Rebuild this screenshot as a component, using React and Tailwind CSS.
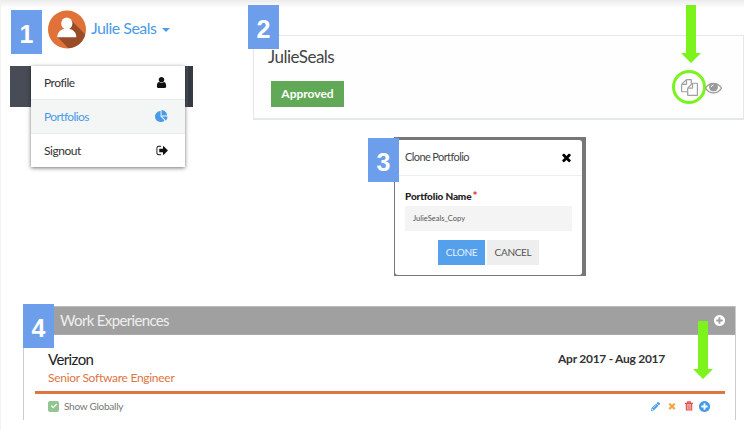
import React from "react";
import { FaPencilAlt, FaCheck } from "react-icons/fa";

const icons = {
  user: "M1536 1399q0 109-62.5 187t-150.5 78h-854q-88 0-150.5-78t-62.5-187q0-85 8.5-160.5t31.5-152 58.5-131 94-89 134.5-34.5q131 128 313 128t313-128q76 0 134.5 34.5t94 89 58.5 131 31.5 152 8.5 160.5zm-256-887q0 159-112.5 271.5t-271.5 112.5-271.5-112.5-112.5-271.5 112.5-271.5 271.5-112.5 271.5 112.5 112.5 271.5z",
  pie: "M768 890l546 546q-106 108-247.5 168t-298.5 60q-209 0-385.5-103t-279.5-279.5-103-385.5 103-385.5 279.5-279.5 385.5-103v762zm187 6h773q0 157-60 298.5t-168 247.5zm709-128h-768v-768q209 0 385.5 103t279.5 279.5 103 385.5z",
  files: "M1696 384q40 0 68 28t28 68v1216q0 40-28 68t-68 28h-960q-40 0-68-28t-28-68v-288h-544q-40 0-68-28t-28-68v-672q0-40 20-88t48-76l408-408q28-28 76-48t88-20h416q40 0 68 28t28 68v328q68-40 128-40h416zm-544 213l-299 299h299v-299zm-640-384l-299 299h299v-299zm196 647l316-316v-416h-384v416q0 40-28 68t-68 28h-416v640h512v-256q0-40 20-88t48-76zm956 804v-1152h-384v416q0 40-28 68t-68 28h-416v640h896z",
  eye: "M1664 960q-152-236-381-353 61 104 61 225 0 185-131.5 316.5t-316.5 131.5-316.5-131.5-131.5-316.5q0-121 61-225-229 117-381 353 133 205 333.5 326.5t434.5 121.5 434.5-121.5 333.5-326.5zm128 0q0 34-20 69-140 230-376.5 368.5t-499.5 138.5-499.5-139-376.5-368q-20-35-20-69t20-69q140-229 376.5-368t499.5-139 499.5 139 376.5 368q20 35 20 69z",
  signOut: "M704 1440q0 4 1 20t.5 26.5-3 23.5-10 19.5-20.5 6.5h-320q-119 0-203.5-84.5t-84.5-203.5v-704q0-119 84.5-203.5t203.5-84.5h320q13 0 22.5 9.5t9.5 22.5q0 4 1 20t.5 26.5-3 23.5-10 19.5-20.5 6.5h-320q-66 0-113 47t-47 113v704q0 66 47 113t113 47h312l11.5 1 11.5 3 8 5.5 7 9 2 13.5zm928-544q0 26-19 45l-544 544q-19 19-45 19t-45-19-19-45v-288h-448q-26 0-45-19t-19-45v-384q0-26 19-45t45-19h448v-288q0-26 19-45t45-19 45 19l544 544q19 19 19 45z",
  plus: "M1344 960v-128q0-26-19-45t-45-19h-256v-256q0-26-19-45t-45-19h-128q-26 0-45 19t-19 45v256h-256q-26 0-45 19t-19 45v128q0 26 19 45t45 19h256v256q0 26 19 45t45 19h128q26 0 45-19t19-45v-256h256q26 0 45-19t19-45zm320-64q0 209-103 385.5t-279.5 279.5-385.5 103-385.5-103-279.5-279.5-103-385.5 103-385.5 279.5-279.5 385.5-103 385.5 103 279.5 279.5 103 385.5z",
  times: "M1490 1322q0 40-28 68l-136 136q-28 28-68 28t-68-28l-294-294-294 294q-28 28-68 28t-68-28l-136-136q-28-28-28-68t28-68l294-294-294-294q-28-28-28-68t28-68l136-136q28-28 68-28t68 28l294 294 294-294q28-28 68-28t68 28l136 136q28 28 28 68t-28 68l-294 294 294 294q28 28 28 68z",
};

function Icon({ name, className }) {
  return (
    <svg viewBox="0 0 1792 1792" fill="currentColor" className={className}>
      <path d={icons[name]} />
      {name === "eye" && (
        <>
          <circle cx="896" cy="860" r="430" />
          <path d="M660 860q0-200 236-220" fill="none" stroke="#fff" strokeWidth="100" />
        </>
      )}
    </svg>
  );
}

function Trash({ className }) {
  return (
    <svg viewBox="0 0 9 11" fill="none" stroke="currentColor" className={className}>
      <path d="M0 2.500h9M3 2V.8h3V2" strokeWidth="1.300" />
      <path d="M1.500 3v7h6V3z" strokeWidth="1.300" fill="currentColor" fillOpacity="0.35" />
      <path d="M3.500 4.500V9M5.500 4.500V9" strokeWidth="0.900" />
    </svg>
  );
}

function Badge({ n, className }) {
  return (
    <div className={`absolute z-10 flex h-11 w-[31px] items-center justify-center bg-[#6d9eeb] pt-1 font-['Liberation_Sans',sans-serif] text-[25px] leading-none font-bold text-white ${className}`}>
      {n}
    </div>
  );
}

function Arrow({ className }) {
  return (
    <svg viewBox="0 0 20 58" fill="#7cf31c" className={`absolute z-20 h-[58px] w-5 ${className}`}>
      <path d="M5 0h10v48h5L10 58 0 48h5z" />
    </svg>
  );
}

function Avatar() {
  return (
    <svg viewBox="0 0 38 39" className="h-[39px] w-[38px]">
      <defs>
        <clipPath id="avatar">
          <circle cx="19" cy="19.5" r="19" />
        </clipPath>
      </defs>
      <g clipPath="url(#avatar)">
        <rect width="38" height="39" fill="#e07239" />
        <path d="M23 10 42 29V44H26L9.500 27l12-4z" fill="#994c28" />
        <ellipse cx="18.800" cy="13.500" rx="5.600" ry="6" fill="#fff" />
        <path d="M9.300 27.200c0-5 3-7 6.200-8.200h6.600c3.200 1.200 6.200 3.200 6.200 8.200z" fill="#fff" />
      </g>
    </svg>
  );
}

function MenuItem({ label, icon, className, iconClass }) {
  return (
    <div className={`flex items-center justify-between pr-[17px] pl-[13px] text-[12px] ${className}`}>
      <span>{label}</span>
      <Icon name={icon} className={iconClass} />
    </div>
  );
}

function AccountMenu() {
  return (
    <section className="relative w-[183px] pt-[10px]">
      <Badge n="1" className="top-[10px] left-px" />
      <div className="flex h-[39px] items-center pl-[38px] text-[#4a9be6]">
        <Avatar />
        <span className="mb-[4px] ml-[5px] w-[67px] text-[16px] whitespace-nowrap tracking-[-0.55px]">Julie Seals</span>
        <span className="ml-[4px] border-x-4 border-t-4 border-x-transparent border-t-[#4a9be6]" />
      </div>
      <div className="mt-[17px] flex h-[41px] justify-end bg-linear-to-r from-[#474c57] from-97% to-[#363a42] to-97%">
        <div className="mr-[8px] h-[101px] w-[154px] shrink-0 bg-white text-[#333] shadow-[0_1px_4px_rgba(0,0,0,0.55)]">
          <MenuItem label="Profile" icon="user" className="h-[33px] tracking-[-0.5px]" iconClass="h-[13px] w-[13px] text-[#111]" />
          <MenuItem label="Portfolios" icon="pie" className="h-[35px] border-y border-[#e9ecec] bg-[#f4f6f6] tracking-[-0.6px] text-[#4a9be6]" iconClass="h-[13px] w-[13px]" />
          <MenuItem label="Signout" icon="signOut" className="h-[33px] tracking-[-0.45px]" iconClass="-mr-px h-[13px] w-[13px] text-[#111]" />
        </div>
      </div>
    </section>
  );
}

function PortfolioCard() {
  return (
    <section className="relative mt-[35px] flex h-[85px] w-[491px] justify-between border border-b-2 border-[#e3e8e8] bg-[#fefefe]">
      <Badge n="2" className="-top-[31px] -left-[6px]" />
      <div className="pl-[14px]">
        <h2 className="mt-[9px] text-[17px] leading-6 tracking-[-0.5px] text-[#444]">JulieSeals</h2>
        <div className="mt-[12px] ml-[3px] flex h-[26px] w-[73px] items-center justify-center bg-[#62a957] text-[12px] font-bold text-white">Approved</div>
      </div>
      <div className="flex items-center pt-[19px] pr-[21px] text-[#a0a0a0]">
        <div className="-mr-px flex h-[34px] w-[34px] items-center justify-center rounded-full border-3 border-[#7cf31c]">
          <Icon name="files" className="mt-[2px] h-[17px] w-[17px]" />
        </div>
        <Icon name="eye" className="mt-[2px] h-[17px] w-[17px] text-[#999]" />
      </div>
      <Arrow className="-top-[31px] right-[42px]" />
    </section>
  );
}

function CloneDialog() {
  return (
    <section className="relative mt-[17px] ml-[394px] h-[139px] w-[192px] bg-[#777] pt-[3px] pr-[4px] pb-px pl-px">
      <Badge n="3" className="top-px -left-[26px]" />
      <div className="h-full rounded-[3px] bg-white">
        <div className="flex h-[36px] items-center justify-between border-b border-[#eee] pr-[9px] pl-[10px] text-[11px] tracking-[-0.6px] text-[#444]">
          <span>Clone Portfolio</span>
          <Icon name="times" className="h-[13px] w-[13px] text-black" />
        </div>
        <div className="px-[10px] pt-[13px]">
          <div className="text-[10px] leading-[15px] font-black tracking-[-0.15px] text-[#222]">
            Portfolio Name <span className="-ml-px text-[12px] leading-none text-[#e33]">*</span>
          </div>
          <div className="mt-[2px] flex h-[25px] items-center bg-[#f4f4f4] pl-2 text-[7.500px] text-[#555]">JulieSeals_Copy</div>
          <div className="mt-[9px] flex gap-[2px] pl-[33px] text-[10px] tracking-[-0.3px]">
            <button className="h-[25px] w-[47px] bg-[#54a0ec] text-[#e4f1fd]">CLONE</button>
            <button className="h-[25px] w-[52px] bg-[#eee] text-[#555]">CANCEL</button>
          </div>
        </div>
      </div>
    </section>
  );
}

function WorkExperiences() {
  return (
    <section className="relative mt-[30px] ml-[23px] h-[114px] w-[713px] border-x border-[#ccc] bg-white">
      <Badge n="4" className="-top-[2px] -left-px" />
      <header className="flex h-[29px] items-center justify-between border-y border-t-[#bbb] border-b-[#aaa] bg-[#a0a0a0] pr-[9px] pl-[36px] text-[15px] text-[#eee]">
        <span className="tracking-[-0.65px]">Work Experiences</span>
        <Icon name="plus" className="h-[13px] w-[13px] text-white" />
      </header>
      <div className="ml-[11px] flex h-[59px] w-[690px] justify-between border-b-3 border-[#e07442] pt-[14px] pr-[60px] pl-[13px]">
        <div>
          <div className="text-[15px] leading-5 tracking-[-0.6px] text-[#222]">Verizon</div>
          <div className="text-[12px] leading-[18px] tracking-[-0.28px] text-[#e07442]">Senior Software Engineer</div>
        </div>
        <div className="text-[12px] leading-5 font-bold tracking-[-0.27px] text-[#333]">Apr 2017 - Aug 2017</div>
      </div>
      <div className="flex h-[24px] items-center pr-[24px] pl-[24px] text-[10px] text-[#777]">
        <span className="flex h-[11px] w-[11px] items-center justify-center rounded-[2px] bg-[#93c590] text-white">
          <FaCheck size={6} />
        </span>
        <span className="ml-[5px] tracking-[-0.25px]">Show Globally</span>
        <FaPencilAlt size={9} className="ml-auto text-[#459be8]" />
        <Icon name="times" className="ml-[7px] h-[10px] w-[10px] text-[#efa64a]" />
        <Trash className="ml-[8px] h-[10px] w-[8px] text-[#e2504c]" />
        <Icon name="plus" className="ml-[5px] h-[13px] w-[13px] text-[#459be8]" />
      </div>
      <Arrow className="top-[15px] right-[22px]" />
    </section>
  );
}

export default function App() {
  return (
    <main className="h-[430px] w-[744px] overflow-hidden border-l border-[#f5f1ef] bg-white font-[Lato,sans-serif]">
      <div className="h-[8px] bg-linear-to-b from-[#ebebeb] to-white" />
      <div className="-mt-[8px] flex h-[120px] gap-[60px] pl-[9px]">
        <AccountMenu />
        <PortfolioCard />
      </div>
      <div className="-ml-px">
        <CloneDialog />
        <WorkExperiences />
      </div>
    </main>
  );
}
